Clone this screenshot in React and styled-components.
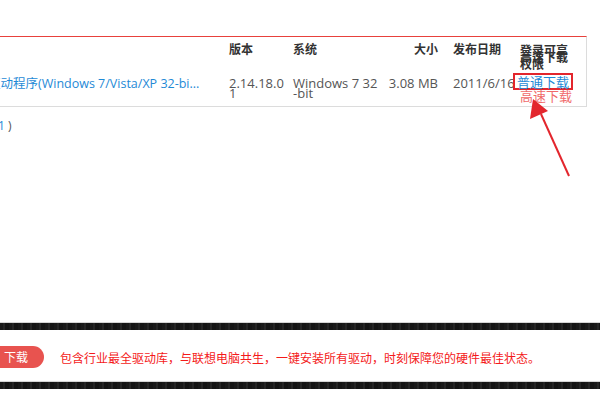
import React from 'react';
import styled, { createGlobalStyle } from 'styled-components';

const GlobalStyle = createGlobalStyle`
  html, body {
    margin: 0;
    padding: 0;
    background: #fff;
  }
  body {
    width: 600px;
    height: 400px;
    overflow: hidden;
    font-family: "Open Sans", "Noto Sans CJK SC", sans-serif;
  }
`;

const Page = styled.div`
  position: relative;
  width: 600px;
  height: 400px;
  overflow: hidden;
  padding-top: 36px;
  box-sizing: border-box;
`;

const Table = styled.div`
  display: grid;
  grid-template-columns: 241px 64px 85px 60px 82px 67px;
  width: 599px;
  margin-left: -12px;
  border-top: 1px solid #e8413c;
  border-right: 1px solid #dcdcdc;
  border-bottom: 1px solid #dcdcdc;
  box-sizing: border-box;
`;

const HeadCell = styled.div`
  height: 27px;
  padding-top: 6px;
  box-sizing: border-box;
  font-family: "Noto Sans CJK SC", sans-serif;
  font-size: 12px;
  font-weight: bold;
  line-height: 12px;
  color: #333;
  text-align: ${p => (p.$right ? 'right' : 'left')};
  padding-left: ${p => p.$pl || 0}px;
`;

const LoginHead = styled.div`
  width: 48px;
  line-height: 7px;
  padding-top: 3px;
  word-break: break-all;
`;

const Cell = styled.div`
  height: 42px;
  padding-top: 14px;
  box-sizing: border-box;
  font-size: 13px;
  line-height: 10px;
  color: #555;
  white-space: nowrap;
  text-align: ${p => (p.$right ? 'right' : 'left')};
  padding-left: ${p => p.$pl || 0}px;
`;

const NameLink = styled.span`
  color: #1f8ad6;
  font-size: 12.5px;
`;

const DownCell = styled.div`
  height: 42px;
  padding-top: 9px;
  box-sizing: border-box;
  font-family: "Noto Sans CJK SC", sans-serif;
  font-size: 13px;
  line-height: 13px;
`;

const NormalLink = styled.span`
  display: inline-block;
  margin-left: -7px;
  padding: 0 2px;
  border: 2px solid #e3262d;
  color: #1f8ad6;
  white-space: nowrap;
`;

const FastLink = styled.div`
  color: #f06a6a;
  white-space: nowrap;
  margin-top: -1px;
`;

const Pager = styled.div`
  margin-top: 12px;
  margin-left: -2px;
  font-size: 12px;
  line-height: 14px;
  color: #555;
`;

const PagerNum = styled.span`
  color: #1f8ad6;
`;

const Band = styled.div`
  height: 7px;
  border-top: 1px solid #d6d6d6;
  background: repeating-linear-gradient(90deg, #1a1a1a 0 3px, #262626 3px 5px, #151515 5px 9px);
`;

const Footer = styled.div`
  margin-top: 189px;
`;

const PromoRow = styled.div`
  height: 51px;
  display: flex;
  align-items: center;
  gap: 16px;
  padding-top: 3px;
  box-sizing: border-box;
`;

const PillButton = styled.div`
  margin-left: -20px;
  height: 22px;
  padding: 0 16px 0 24px;
  border-radius: 11px;
  background: #e8534f;
  color: #fff;
  font-family: "Noto Sans CJK SC", sans-serif;
  font-size: 12px;
  line-height: 22px;
  white-space: nowrap;
`;

const PromoText = styled.div`
  font-family: "Noto Sans CJK SC", sans-serif;
  font-size: 12px;
  color: #f41a1a;
  white-space: nowrap;
`;

const ArrowLayer = styled.svg`
  position: absolute;
  left: 0;
  top: 0;
  pointer-events: none;
`;

export default function App() {
  return (
    <Page>
      <GlobalStyle />
      <Table>
        <HeadCell />
        <HeadCell>版本</HeadCell>
        <HeadCell>系统</HeadCell>
        <HeadCell $right>大小</HeadCell>
        <HeadCell $pl={15}>发布日期</HeadCell>
        <HeadCell>
          <LoginHead>登录可享高速下载权限</LoginHead>
        </HeadCell>

        <Cell>
          <NameLink>驱动程序(Windows 7/Vista/XP 32-bi...</NameLink>
        </Cell>
        <Cell>2.14.18.0<br />1</Cell>
        <Cell>Windows 7 32<br />-bit</Cell>
        <Cell $right>3.08 MB</Cell>
        <Cell $pl={15}>2011/6/16</Cell>
        <DownCell>
          <NormalLink>普通下载</NormalLink>
          <FastLink>高速下载</FastLink>
        </DownCell>
      </Table>

      <Pager>
        <PagerNum>1</PagerNum> )
      </Pager>

      <Footer>
        <Band />
        <PromoRow>
          <PillButton>下载</PillButton>
          <PromoText>包含行业最全驱动库，与联想电脑共生，一键安装所有驱动，时刻保障您的硬件最佳状态。</PromoText>
        </PromoRow>
        <Band />
      </Footer>

      <ArrowLayer width="600" height="400" viewBox="0 0 600 400">
        <line x1="569" y1="176" x2="541" y2="114" stroke="#e3262d" strokeWidth="2" />
        <polygon points="533,99 530,119 548,111" fill="#e3262d" />
      </ArrowLayer>
    </Page>
  );
}
